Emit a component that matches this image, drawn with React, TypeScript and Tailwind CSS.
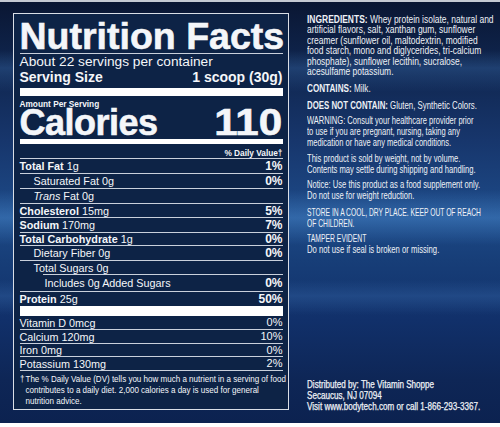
import React from "react";

type Row = {
  h: string;
  name: React.ReactNode;
  pct: string;
  indent?: string;
  rule?: string;
  pctBold?: boolean;
};

const rows: Row[] = [
  { h: "h-[15px]", name: <><b>Total Fat</b> 1g</>, pct: "1%", pctBold: true },
  { h: "h-[15px]", name: <>Saturated Fat 0g</>, pct: "0%", indent: "pl-[14px]", pctBold: true },
  { h: "h-[15px]", name: <><i>Trans</i> Fat 0g</>, pct: "", indent: "pl-[14px]", pctBold: true },
  { h: "h-[14px]", name: <><b>Cholesterol</b> 15mg</>, pct: "5%", pctBold: true },
  { h: "h-[15px]", name: <><b>Sodium</b> 170mg</>, pct: "7%", pctBold: true },
  { h: "h-[13px]", name: <><b>Total Carbohydrate</b> 1g</>, pct: "0%", pctBold: true },
  { h: "h-[15px]", name: <>Dietary Fiber 0g</>, pct: "0%", indent: "pl-[14px]", pctBold: true },
  { h: "h-[14px]", name: <>Total Sugars 0g</>, pct: "", indent: "pl-[14px]", rule: "ml-[23px]", pctBold: true },
  { h: "h-[17px]", name: <>Includes 0g Added Sugars</>, pct: "0%", indent: "pl-[25px]", pctBold: true },
];

const vits: Row[] = [
  { h: "h-[14px]", name: <>Vitamin D 0mcg</>, pct: "0%" },
  { h: "h-[14px]", name: <>Calcium 120mg</>, pct: "10%" },
  { h: "h-[13px]", name: <>Iron 0mg</>, pct: "0%" },
  { h: "h-[14px]", name: <>Potassium 130mg</>, pct: "2%" },
];

function NRow({ r }: { r: Row }) {
  return (
    <div className={`${r.h} flex flex-col`}>
      <div className={`flex-1 flex items-center justify-between ${r.indent ?? ""}`}>
        <span className="text-[10.8px] leading-none whitespace-nowrap">{r.name}</span>
        <span className={`leading-none ${r.pctBold ? "font-bold text-[12px]" : "text-[11px]"}`}>{r.pct}</span>
      </div>
      <div className={`h-px bg-[#c9d0db] ${r.rule ?? ""}`} />
    </div>
  );
}

export default function App() {
  return (
    <div className="w-[500px] h-[427px] flex flex-col overflow-hidden [font-family:'Liberation_Sans',Arial,sans-serif] text-[#f4f6f9] bg-[linear-gradient(180deg,rgba(70,130,200,0)_50px,rgba(70,130,200,0.28)_68px,rgba(70,130,200,0)_92px,rgba(70,130,200,0)_190px,rgba(90,160,230,0.35)_218px,rgba(90,160,230,0)_245px,rgba(80,140,210,0)_280px,rgba(80,140,210,0.22)_296px,rgba(80,140,210,0)_315px),linear-gradient(180deg,#0a1632_0px,#0e2248_50px,#17366c_140px,#1d4a88_215px,#173e78_260px,#11306a_320px,#0e2656_380px,#0c2250_423px)]">
      <div className="h-[2px] bg-[#c5cad3] shrink-0" />
      <div className="flex-1 flex min-w-0">
        {/* Label */}
        <div className="ml-[13px] mt-[11px] w-[276px] h-[397px] shrink-0 border-[1.5px] border-[#d9dee6] bg-[#0d2346] px-[5.5px] flex flex-col">
          <div className="mt-[4.7px] text-[37.5px] leading-[34px] font-bold whitespace-nowrap [-webkit-text-stroke:0.6px_#f4f6f9]">
            Nutrition Facts
          </div>
          <div className="h-px bg-[#c9d0db]" />
          <div className="text-[13.7px] leading-[16.6px] whitespace-nowrap">About 22 servings per container</div>
          <div className="text-[14px] leading-[15.4px] font-bold flex justify-between whitespace-nowrap">
            <span>Serving Size</span>
            <span>1 scoop (30g)</span>
          </div>
          <div className="mt-[2.8px] h-[8px] bg-white" />
          <div className="pt-[3px] text-[8.3px] leading-[10px] font-bold">Amount Per Serving</div>
          <div className="flex justify-between items-baseline text-[36px] leading-[28px] font-bold [-webkit-text-stroke:0.6px_#f4f6f9]">
            <span className="tracking-[-0.5px]">Calories</span>
            <span className="origin-right scale-x-[1.17]">110</span>
          </div>
          <div className="mt-[2px] h-[5px] bg-white" />
          <div className="h-[15px] flex flex-col">
            <div className="flex-1 flex justify-end items-end text-[8.3px] leading-[10px] font-bold">% Daily Value†</div>
            <div className="h-px bg-[#c9d0db]" />
          </div>
          {rows.map((r, i) => (
            <NRow key={i} r={r} />
          ))}
          <div className="h-[14px] flex items-center justify-between">
            <span className="text-[10.8px] leading-none"><b>Protein</b> 25g</span>
            <span className="text-[12px] font-bold leading-none">50%</span>
          </div>
          <div className="h-[10px] bg-white" />
          {vits.map((r, i) => (
            <NRow key={i} r={r} />
          ))}
          <div className="pt-[1.5px] flex text-[9.5px] leading-[11px] whitespace-nowrap origin-left scale-x-[0.845]">
            <span className="w-[6.5px] shrink-0">†</span>
            <div>
              The % Daily Value (DV) tells you how much a nutrient in a serving of food
              <br />
              contributes to a daily diet. 2,000 calories a day is used for general
              <br />
              nutrition advice.
            </div>
          </div>
        </div>

        {/* Right column */}
        <div className="ml-[18px] w-[175px] shrink-0 pt-[12.75px] pb-[10.5px] flex flex-col text-[10.2px] whitespace-nowrap text-[#eef1f6]">
          <div className="leading-[10.5px] origin-left scale-x-[0.83]">
            <b>INGREDIENTS:</b> Whey protein isolate, natural and
            <br />
            artificial flavors, salt, xanthan gum, sunflower
            <br />
            creamer (sunflower oil, maltodextrin, modified
            <br />
            food starch, mono and diglycerides, tri-calcium
            <br />
            phosphate), sunflower lecithin, sucralose,
            <br />
            acesulfame potassium.
          </div>
          <div className="mt-[4.75px] leading-[11px] origin-left scale-x-[0.8]">
            <b>CONTAINS:</b> Milk.
          </div>
          <div className="mt-[6px] leading-[11px] origin-left scale-x-[0.77]">
            <b>DOES NOT CONTAIN:</b> Gluten, Synthetic Colors.
          </div>
          <div className="mt-[4px] leading-[11px] origin-left scale-x-[0.74]">
            WARNING: Consult your healthcare provider prior
            <br />
            to use if you are pregnant, nursing, taking any
            <br />
            medication or have any medical conditions.
          </div>
          <div className="mt-[5px] leading-[11px] origin-left scale-x-[0.746]">
            This product is sold by weight, not by volume.
            <br />
            Contents may settle during shipping and handling.
          </div>
          <div className="mt-[4px] leading-[11px] origin-left scale-x-[0.746]">
            Notice: Use this product as a food supplement only.
            <br />
            Do not use for weight reduction.
          </div>
          <div className="mt-[6px] leading-[11px] origin-left scale-x-[0.66]">
            STORE IN A COOL, DRY PLACE. KEEP OUT OF REACH
            <br />
            OF CHILDREN.
          </div>
          <div className="mt-[4px] leading-[11px] flex flex-col">
            <span className="origin-left scale-x-[0.67]">TAMPER EVIDENT</span>
            <span className="origin-left scale-x-[0.756]">Do not use if seal is broken or missing.</span>
          </div>
          <div className="mt-auto leading-[10.8px] text-[10px] origin-left scale-x-[0.81] [-webkit-text-stroke:0.25px_#eef1f6]">
            Distributed by: The Vitamin Shoppe
            <br />
            Secaucus, NJ 07094
            <br />
            Visit www.bodytech.com or call 1-866-293-3367.
          </div>
        </div>
      </div>
      <div className="h-[4px] bg-white shrink-0" />
    </div>
  );
}
